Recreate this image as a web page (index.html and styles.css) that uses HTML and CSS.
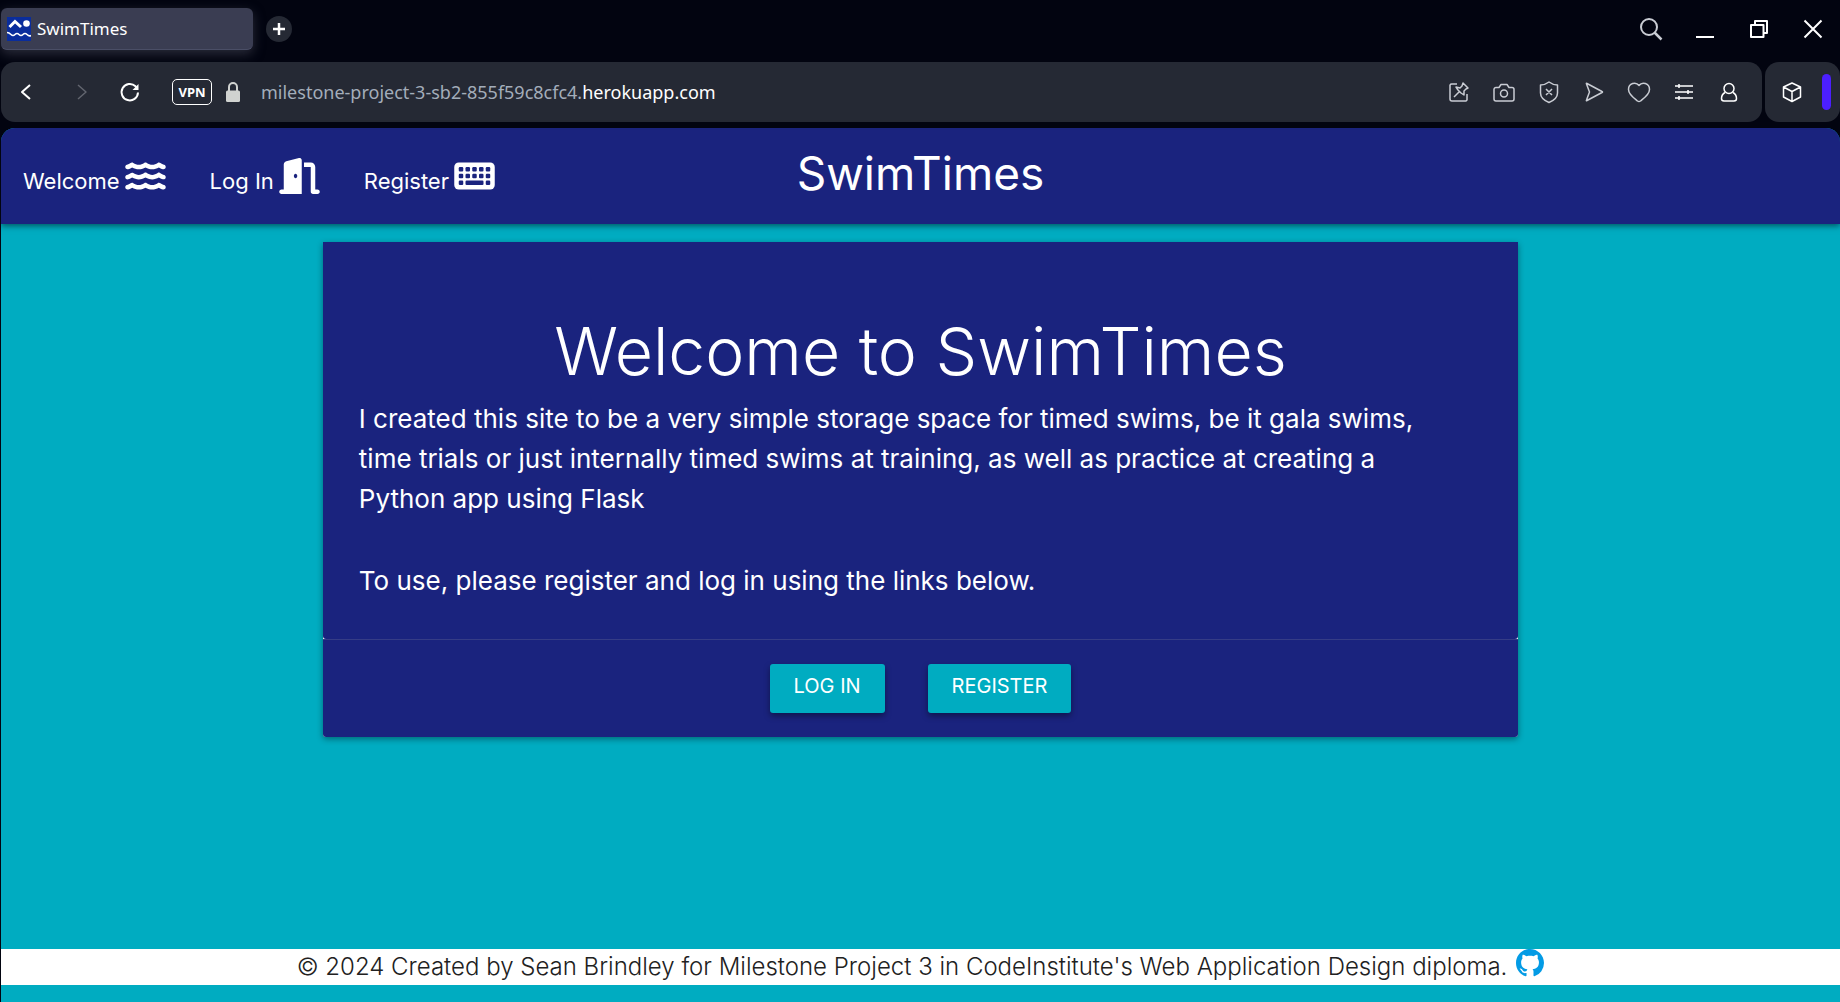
FILE: index.html
```html
<!DOCTYPE html>
<html lang="en">
<head>
<meta charset="utf-8">
<meta name="viewport" content="width=device-width, initial-scale=1">
<title>SwimTimes</title>
<link rel="stylesheet" href="styles.css">
</head>
<body>
<div class="browser">
  <div class="tab-strip">
    <div class="tab">
      <svg class="favicon" viewBox="0 0 24 24" aria-hidden="true"><rect width="24" height="24" fill="#0a2d9c"/><circle cx="19.500" cy="6.500" r="3.300" fill="#fff"/><path d="M2.500 10 8 4.500 14 10" fill="none" stroke="#fff" stroke-width="3"/><path d="M0 15.500q2 0 4 2t4 0 4 0 4 0 4 0 4 1" fill="none" stroke="#fff" stroke-width="1.600"/></svg>
      <span>SwimTimes</span>
    </div>
    <button class="new-tab" aria-label="New tab"><svg viewBox="0 0 12 12" width="12" height="12"><path d="M6 0v12M0 6h12" stroke="#fff" stroke-width="2.500"/></svg></button>
    <div class="window-controls">
      <button aria-label="Search tabs"><svg class="ico" viewBox="0 0 24 24"><circle cx="10" cy="10" r="8" stroke="#c9ccd3" stroke-width="2"/><path d="m15.500 15.500 7 7" stroke="#c9ccd3" stroke-width="2.500"/></svg></button>
      <button aria-label="Minimize"><svg class="ico" viewBox="0 0 24 24"><path d="M3 20h18" stroke-width="2"/></svg></button>
      <button aria-label="Restore"><svg class="ico" viewBox="0 0 24 24"><path d="M4 8h12.500v12H4zM8 8V4h12v12h-4" stroke-width="2"/></svg></button>
      <button aria-label="Close"><svg class="ico" viewBox="0 0 24 24"><path d="m3.500 3.500 17 17m0-17-17 17" stroke-width="2"/></svg></button>
    </div>
  </div>
  <div class="toolbar">
    <div class="address-bar">
      <div class="history">
        <button aria-label="Back"><svg class="ico" viewBox="0 0 24 24"><path d="m16 5-8 7 8 7" stroke-width="2"/></svg></button>
        <button aria-label="Forward" disabled><svg class="ico" viewBox="0 0 24 24"><path d="m12 5 8 7-8 7" stroke="#62656f"/></svg></button>
        <button aria-label="Reload"><svg class="ico" viewBox="0 0 24 24"><path d="M20 12.500A8.200 8.200 0 1 1 17.500 6.300L19 8" stroke-width="2"/><path d="M20.500 4v6h-6z" fill="#fff" stroke="none"/></svg></button>
      </div>
      <button class="vpn">VPN</button>
      <svg class="lock" viewBox="0 0 14 20" width="14" height="20" aria-hidden="true"><path d="M3 9V5a4 4 0 0 1 8 0v4" fill="none" stroke="#d0d2d0" stroke-width="2"/><rect y="8.500" width="14" height="11.500" rx="1.500" fill="#d0d2d0"/></svg>
      <div class="url" role="textbox" aria-label="Address">milestone-project-3-sb2-855f59c8cfc4.<span class="url-host">herokuapp.com</span></div>
      <div class="actions">
        <button aria-label="Pin"><svg class="ico soft" viewBox="0 0 24 24"><path d="M10 4H5a2 2 0 0 0-2 1v14a2 2 0 0 0 2 2h14l1-1v-6"/><path d="m16 3 5 5-2 1-2 2v4l-3-2-3-3-2-3 4 1 2-2zM12 12l-5 5"/></svg></button>
        <button aria-label="Snapshot"><svg class="ico soft" viewBox="0 0 24 24"><path d="M4 7.500h3l2-3h6l2 3h3a2 2 0 0 1 2 2V19a2 2 0 0 1-2 2H4a2 2 0 0 1-2-2V9.500a2 2 0 0 1 2-2z"/><circle cx="12" cy="13.500" r="3.500"/></svg></button>
        <button aria-label="Blocker"><svg class="ico soft" viewBox="0 0 24 24"><path d="M12 2q4 3 8.500 3v8q0 6-8.500 9.500Q3.500 19 3.500 13V5Q8 5 12 2zM9 9l6 6m0-6-6 6"/></svg></button>
        <button aria-label="Send"><svg class="ico soft" viewBox="0 0 24 24"><path d="M4.500 4Q4 3 5 3.500l15 8q1 .5 0 1l-15 8q-1 .5-.5-.5l3-8z"/></svg></button>
        <button aria-label="Favourite"><svg class="ico soft" viewBox="0 0 24 24"><path d="M12 5.500C9 1.500 1.500 3 1.500 9.500c0 5 6 9 9 11.500q1.500 1 3 0c3-2.500 9-6.500 9-11.500C22.500 3 15 1.500 12 5.500z"/></svg></button>
        <button aria-label="Easy setup"><svg class="ico" viewBox="0 0 24 24"><path d="M3 6h18M3 12h18M3 18h18M7 4v4M16 10v4M7 16v4"/></svg></button>
        <button aria-label="Profile"><svg class="ico" viewBox="0 0 24 24"><circle cx="12" cy="8.500" r="5"/><path d="M8 12.500C5.500 14 4.500 16 4.500 18.500c0 1.500 1 2.500 2.500 2.500h10c1.500 0 2.500-1 2.500-2.500 0-2.500-1-4.500-3.500-6"/></svg></button>
      </div>
    </div>
    <div class="side-panel">
      <button aria-label="Extensions"><svg class="ico" viewBox="0 0 24 24"><path d="m12 3 8.500 4v10L12 21.500 3.500 17V7zM3.500 7l8.500 4.500L20.500 7M12 11.500v10"/></svg></button>
      <span class="marker"></span>
    </div>
  </div>

  <div class="page">
    <nav class="navbar">
      <ul class="nav-links">
        <li><a href="#welcome">Welcome<svg class="fa" viewBox="0 0 576 512" aria-hidden="true"><defs><path id="wave" d="M269.500 69.900c11.100-7.900 25.900-7.900 37 0C329 85.400 356.500 96 384 96c26.900 0 55.400-10.800 77.400-26.100c11.900-8.500 28.100-7.800 39.200 1.700c14.400 11.900 32.500 21 50.600 25.200c17.200 4 27.900 21.200 23.900 38.400s-21.200 27.900-38.400 23.900c-24.500-5.700-44.900-16.500-58.200-25C449.500 149.700 417 160 384 160c-31.900 0-60.600-9.900-80.400-18.900c-5.800-2.700-11.100-5.300-15.600-7.700c-4.500 2.400-9.700 5.100-15.600 7.700c-19.800 9-48.500 18.900-80.400 18.900c-33 0-65.500-10.300-94.500-25.800c-13.400 8.400-33.700 19.300-58.200 25c-17.200 4-34.400-6.700-38.400-23.900s6.700-34.400 23.900-38.400C42.800 92.600 61 83.500 75.300 71.600c11.100-9.500 27.300-10.100 39.200-1.700C136.700 85.200 165.100 96 192 96c27.500 0 55-10.600 77.500-26.100z"/></defs><use href="#wave"/><use href="#wave" y="144"/><use href="#wave" y="288"/></svg></a></li>
        <li><a href="#login">Log In<svg class="fa" viewBox="0 0 576 512" aria-hidden="true"><path d="M320 32c0-9.900-4.500-19.200-12.300-25.200S289.800-1.400 280.200 1l-179.900 45C79 51.300 64 70.500 64 92.500V448H32c-17.700 0-32 14.300-32 32s14.300 32 32 32H320V32zM256 256c0 17.700-10.700 32-24 32s-24-14.300-24-32s10.700-32 24-32s24 14.300 24 32zm96-128h96V480c0 17.700 14.300 32 32 32h64c17.700 0 32-14.300 32-32s-14.300-32-32-32H512V128c0-35.300-28.700-64-64-64H352v64z"/></svg></a></li>
        <li><a href="#register">Register<svg class="fa" viewBox="0 0 576 512" aria-hidden="true"><rect y="64" width="576" height="384" rx="64"/><g fill="#1a237e"><rect x="64" y="128" width="64" height="64" rx="16"/><rect x="160" y="128" width="64" height="64" rx="16"/><rect x="256" y="128" width="64" height="64" rx="16"/><rect x="352" y="128" width="64" height="64" rx="16"/><rect x="448" y="128" width="64" height="64" rx="16"/><rect x="64" y="224" width="64" height="64" rx="16"/><rect x="160" y="224" width="64" height="64" rx="16"/><rect x="256" y="224" width="64" height="64" rx="16"/><rect x="352" y="224" width="64" height="64" rx="16"/><rect x="448" y="224" width="64" height="64" rx="16"/><rect x="64" y="320" width="64" height="64" rx="16"/><rect x="160" y="320" width="256" height="64" rx="16"/><rect x="448" y="320" width="64" height="64" rx="16"/></g></svg></a></li>
      </ul>
      <a class="brand" href="#home">SwimTimes</a>
    </nav>
    <main class="main">
      <section class="card">
        <div class="card-content">
          <h1>Welcome to SwimTimes</h1>
          <p>I created this site to be a very simple storage space for timed swims, be it gala swims, time trials or just internally timed swims at training, as well as practice at creating a Python app using Flask</p>
          <p>To use, please register and log in using the links below.</p>
        </div>
        <div class="card-action">
          <a class="btn" href="#login">LOG IN</a>
          <a class="btn" href="#register">REGISTER</a>
        </div>
      </section>
    </main>
    <footer class="footer">
      <span>© 2024 Created by Sean Brindley for Milestone Project 3 in CodeInstitute's Web Application Design diploma.</span>
      <a href="#github" aria-label="GitHub"><svg viewBox="0 0 16 16" width="28" height="28"><path fill="#039be5" d="M8 0C3.580 0 0 3.580 0 8c0 3.540 2.290 6.530 5.470 7.590.4.070.55-.17.55-.38 0-.19-.01-.82-.01-1.490-2.010.37-2.530-.49-2.690-.94-.09-.23-.48-.94-.82-1.130-.28-.15-.68-.52-.01-.53.63-.01 1.080.58 1.230.82.720 1.210 1.870.87 2.330.66.070-.52.280-.87.510-1.070-1.780-.2-3.640-.89-3.640-3.950 0-.87.310-1.590.820-2.150-.08-.2-.36-1.020.080-2.120 0 0 .67-.21 2.200.82.640-.18 1.320-.27 2-.27s1.360.09 2 .27c1.530-1.040 2.200-.82 2.200-.82.440 1.100.160 1.920.080 2.120.510.560.820 1.270.820 2.150 0 3.070-1.870 3.750-3.650 3.950.290.250.540.730.540 1.480 0 1.070-.01 1.930-.01 2.200 0 .210.150.460.550.380A8.010 8.010 0 0 0 16 8c0-4.420-3.580-8-8-8z"/></svg></a>
    </footer>
  </div>
</div>
</body>
</html>
```

FILE: styles.css
```css
* { box-sizing: border-box; }

body {
  margin: 0;
  background: #020410;
  color: #fff;
  font-family: Inter, "Open Sans", sans-serif;
}

a { color: inherit; text-decoration: none; }

button {
  display: grid;
  place-items: center;
  padding: 0;
  border: 0;
  background: none;
  color: inherit;
  font: inherit;
}

.browser {
  display: flex;
  flex-direction: column;
  min-height: 100vh;
}

.ico {
  width: 24px;
  height: 24px;
  fill: none;
  stroke: #fff;
  stroke-width: 1.5;
  stroke-linejoin: round;
}

.soft { stroke: #c9ccd3; }

/* Browser window */
.tab-strip {
  display: flex;
  align-items: center;
  height: 62px;
  padding: 0 0 4px 1px;
  font-family: "Noto Sans", sans-serif;
  font-size: 17px;
}

.tab {
  display: flex;
  align-items: center;
  gap: 6px;
  width: 252px;
  height: 42px;
  padding-left: 6px;
  border-bottom: 1px solid #4a4e66;
  border-radius: 6px;
  background: #3a3d52;
  box-shadow: 0 4px 12px #2a2c3a;
}

.favicon { width: 24px; height: 24px; }

.new-tab {
  width: 26px;
  height: 26px;
  margin-left: 13px;
  border-radius: 50%;
  background: #252934;
}

.window-controls { display: flex; margin-left: auto; }
.window-controls button { width: 54px; height: 42px; }

.toolbar {
  display: flex;
  gap: 3px;
  height: 60px;
  padding-left: 1px;
  font-family: "Noto Sans", sans-serif;
}

.address-bar,
.side-panel {
  display: flex;
  align-items: center;
  border-radius: 14px;
  background: #252934;
}

.address-bar { flex: 1; }

.history { display: flex; gap: 28px; padding-left: 13px; }

.vpn {
  width: 40px;
  height: 26px;
  margin-left: 30px;
  border: 1px solid #fff;
  border-radius: 5px;
  font-size: 13px;
  font-weight: 700;
}

.lock { margin-left: 14px; }

.url {
  flex: 1;
  padding-left: 21px;
  color: #a3adba;
  font-size: 18px;
}

.url-host { color: #fff; }

.actions { display: flex; padding-right: 11px; }
.actions button { width: 45px; height: 45px; }

.side-panel {
  justify-content: space-between;
  width: 75px;
  padding: 0 9px 0 15px;
}

.marker {
  width: 9px;
  height: 36px;
  border-radius: 5px;
  background: #4c1fff;
}

/* Site */
.page {
  display: flex;
  flex: 1;
  flex-direction: column;
  margin: 6px 0 0 1px;
  border-radius: 14px 14px 0 0;
  overflow: hidden;
  background: #00acc1;
}

.navbar {
  display: grid;
  grid-template-columns: 1fr auto 1fr;
  align-items: center;
  height: 96px;
  background: #1a237e;
  box-shadow: 0 2px 6px rgba(0, 0, 0, .5);
}

.nav-links {
  display: flex;
  margin: 0;
  padding: 0;
  list-style: none;
  font-size: 22px;
  line-height: 86px;
}

.nav-links a { display: block; padding: 10px 22px 0; white-space: nowrap; }

.fa {
  width: 41px;
  height: 36px;
  margin-left: 5px;
  fill: #fff;
  vertical-align: -5px;
}

.brand { padding-bottom: 6px; font-size: 46px; }

.main { flex: 1; padding: 18px 0; }

.card {
  width: 65%;
  margin: 0 auto;
  border-radius: 0 0 3px 3px;
  background: #fff;
  box-shadow: 0 2px 6px rgba(0, 0, 0, .4);
}

.card-content {
  padding: 36px;
  border-radius: 0 0 3px 3px;
  background: #1a237e;
}

h1 {
  margin: 40px 0 15px;
  font-size: 66px;
  font-weight: 300;
  line-height: 66px;
  text-align: center;
}

p { margin: 0; padding-right: 24px; font-size: 26px; line-height: 40px; }
p + p { margin: 42px 0 2px; }

.card-action {
  display: flex;
  justify-content: center;
  gap: 43px;
  padding: 24px;
  border-top: 1px solid #353c86;
  border-radius: 0 0 3px 3px;
  background: #1a237e;
}

.btn {
  height: 49px;
  padding: 0 24px;
  border-radius: 3px;
  background: #00acc1;
  box-shadow: 0 3px 6px rgba(0, 0, 0, .4);
  font-size: 20px;
  line-height: 44px;
}

.footer {
  display: flex;
  justify-content: center;
  gap: 9px;
  height: 36px;
  margin-bottom: 17px;
  background: #fff;
  color: #212121;
  font-size: 24px;
  font-weight: 300;
  line-height: 36px;
}
```
